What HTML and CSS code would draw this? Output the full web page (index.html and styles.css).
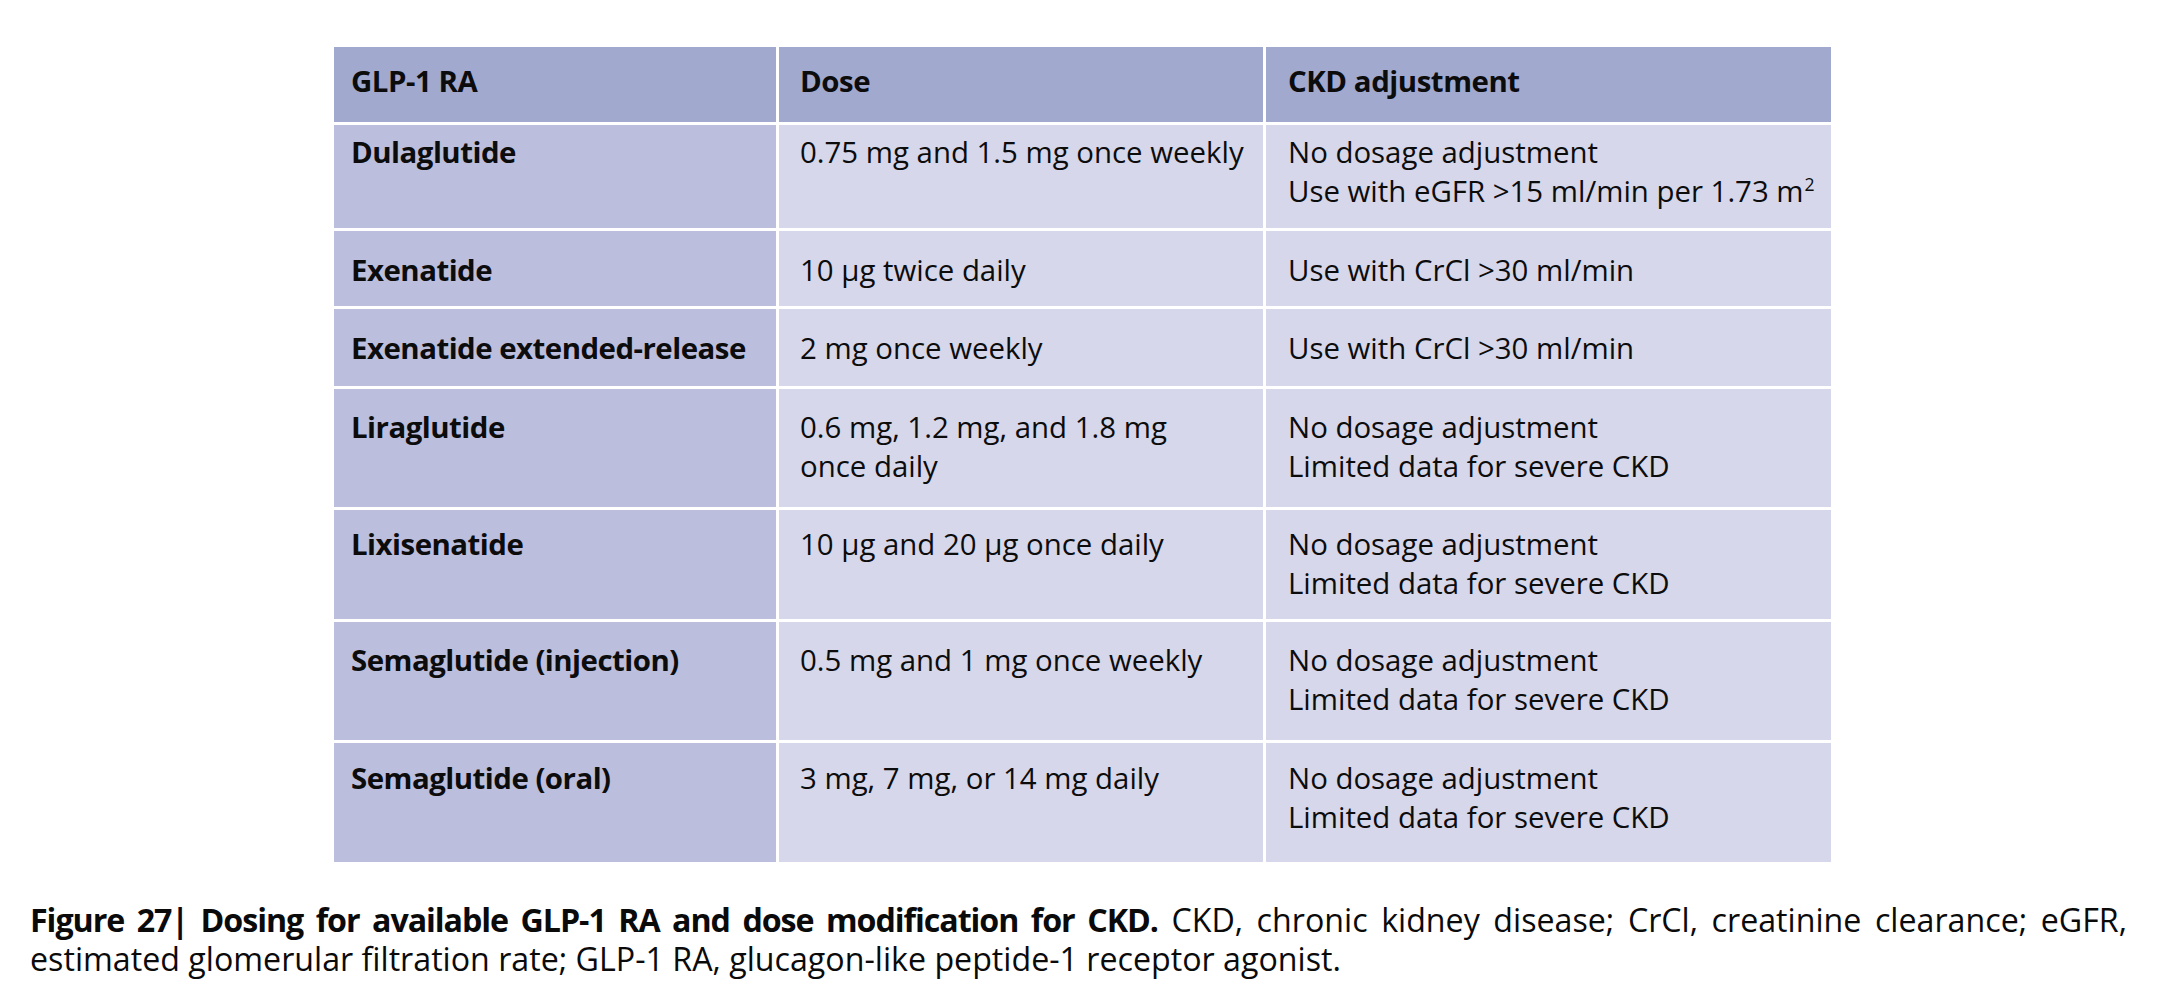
FILE: index.html
```html
<!DOCTYPE html>
<html lang="en">
<head>
<meta charset="utf-8">
<title>Figure 27</title>
<link rel="stylesheet" href="styles.css">
</head>
<body>
<div class="page">
  <div class="table">
    <div class="row head">
      <div class="cell c1">GLP-1 RA</div>
      <div class="cell c2">Dose</div>
      <div class="cell c3">CKD adjustment</div>
    </div>
    <div class="row r1">
      <div class="cell c1">Dulaglutide</div>
      <div class="cell c2">0.75 mg and 1.5 mg once weekly</div>
      <div class="cell c3">No dosage adjustment<br>Use with eGFR &gt;15 ml/min per 1.73 m<sup>2</sup></div>
    </div>
    <div class="row r2">
      <div class="cell c1">Exenatide</div>
      <div class="cell c2">10 μg twice daily</div>
      <div class="cell c3">Use with CrCl &gt;30 ml/min</div>
    </div>
    <div class="row r3">
      <div class="cell c1">Exenatide extended-release</div>
      <div class="cell c2">2 mg once weekly</div>
      <div class="cell c3">Use with CrCl &gt;30 ml/min</div>
    </div>
    <div class="row r4">
      <div class="cell c1">Liraglutide</div>
      <div class="cell c2">0.6 mg, 1.2 mg, and 1.8 mg<br>once daily</div>
      <div class="cell c3">No dosage adjustment<br>Limited data for severe CKD</div>
    </div>
    <div class="row r5">
      <div class="cell c1">Lixisenatide</div>
      <div class="cell c2">10 μg and 20 μg once daily</div>
      <div class="cell c3">No dosage adjustment<br>Limited data for severe CKD</div>
    </div>
    <div class="row r6">
      <div class="cell c1">Semaglutide (injection)</div>
      <div class="cell c2">0.5 mg and 1 mg once weekly</div>
      <div class="cell c3">No dosage adjustment<br>Limited data for severe CKD</div>
    </div>
    <div class="row r7">
      <div class="cell c1">Semaglutide (oral)</div>
      <div class="cell c2">3 mg, 7 mg, or 14 mg daily</div>
      <div class="cell c3">No dosage adjustment<br>Limited data for severe CKD</div>
    </div>
  </div>
  <div class="caption">
    <p class="cap-line cap-first"><b>Figure 27| Dosing for available GLP-1 RA and dose modification for CKD.</b> CKD, chronic kidney disease; CrCl, creatinine clearance; eGFR,</p>
    <p class="cap-line">estimated glomerular filtration rate; GLP-1 RA, glucagon-like peptide-1 receptor agonist.</p>
  </div>
</div>
</body>
</html>
```
FILE: styles.css
```css
html, body {
  margin: 0;
  padding: 0;
  background: #ffffff;
}

body {
  font-family: "Open Sans", "Noto Sans", sans-serif;
  color: #0c0c0c;
  width: 2157px;
  height: 1006px;
  overflow: hidden;
}

.page {
  padding: 47px 0 0 30px;
}

.table {
  margin-left: 304px;
  width: 1497px;
  display: flex;
  flex-direction: column;
  gap: 3px;
}

.row {
  display: grid;
  grid-template-columns: 442px 484px 1fr;
  column-gap: 3px;
  font-size: 29.4px;
  line-height: 39px;
}

.cell {
  background: #d6d7ea;
  box-sizing: border-box;
}

.c1 {
  background: #bbbedd;
  font-weight: 700;
  letter-spacing: -0.5px;
  padding-left: 17px;
}

.c2 {
  padding-left: 21px;
}

.c3 {
  padding-left: 22px;
}

.head .cell {
  background: #a1a9cf;
  font-weight: 700;
  letter-spacing: -0.45px;
}

sup {
  font-size: 0.6em;
  line-height: 0;
  vertical-align: 0.62em;
  margin-left: 1px;
}

.head { height: 75px; }
.head .cell { padding-top: 15px; }

.r1 { height: 103px; }
.r1 .cell { padding-top: 7.5px; }

.r2 { height: 75px; }
.r2 .cell { padding-top: 20px; }

.r3 { height: 77px; }
.r3 .cell { padding-top: 19.5px; }

.r4 { height: 118px; }
.r4 .cell { padding-top: 18.5px; }

.r5 { height: 109px; }
.r5 .cell { padding-top: 14.75px; }

.r6 { height: 118px; }
.r6 .cell { padding-top: 19px; }

.r7 { height: 119px; }
.r7 .cell { padding-top: 16px; }

.caption {
  margin-top: 39px;
  width: 2097px;
  font-size: 32.2px;
  line-height: 38.5px;
  color: #0a0a0a;
}

.cap-line {
  margin: 0;
  white-space: nowrap;
}

.cap-first {
  text-align: justify;
  text-align-last: justify;
}

.caption b {
  font-weight: 700;
  letter-spacing: -1.05px;
}
```
